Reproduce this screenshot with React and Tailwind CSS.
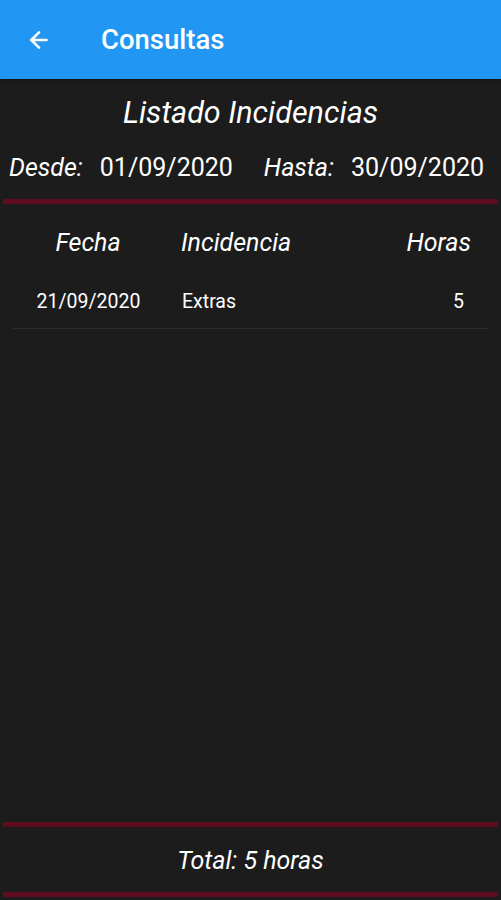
import { ArrowLeft } from 'lucide-react';

const font = { fontFamily: 'Roboto, "Liberation Sans", sans-serif' };

function RedLine() {
  return <div className="mx-[3px] h-[5px] bg-[#5f0c1f]" />;
}

export default function App() {
  return (
    <div className="flex h-[900px] w-[501px] flex-col bg-[#1c1c1c] text-white" style={font}>
      <header className="flex h-[79px] shrink-0 items-center bg-[#2196f3] shadow-[0_1px_2px_rgba(0,0,0,0.4)]">
        <button className="ml-[26px] flex h-[26px] w-[26px] items-center justify-center text-white">
          <ArrowLeft size={26} strokeWidth={2.4} />
        </button>
        <h1 className="ml-[49px] text-[27.5px] font-medium leading-none">Consultas</h1>
      </header>

      <div className="pt-[16px] text-center text-[30.5px] italic leading-[36px]">Listado Incidencias</div>
      <div className="mt-[22px] flex items-center px-[9px] text-[25px] leading-[30px]">
        <span className="italic">Desde:</span>
        <span className="ml-[17px]">01/09/2020</span>
        <span className="ml-[31px] italic">Hasta:</span>
        <span className="ml-[17px]">30/09/2020</span>
      </div>
      <div className="mt-[16px]">
        <RedLine />
      </div>

      <div className="mx-[12px]">
        <div className="flex h-[78px] items-center text-[25px] italic">
          <div className="w-[152px] text-center">Fecha</div>
          <div className="flex-1 pl-[17px]">Incidencia</div>
          <div className="pr-[18px] text-right">Horas</div>
        </div>
        <div className="flex h-[47px] items-start border-b border-[#2a2a2a] pt-[9px] text-[19.5px] leading-[22px]">
          <div className="w-[153px] text-center">21/09/2020</div>
          <div className="flex-1 pl-[17px]">Extras</div>
          <div className="pr-[25px] text-right">5</div>
        </div>
      </div>

      <div className="flex-1" />

      <RedLine />
      <div className="flex h-[65px] items-center justify-center pt-[2px] text-[25px] italic">Total: 5 horas</div>
      <RedLine />
      <div className="h-[3px]" />
    </div>
  );
}
